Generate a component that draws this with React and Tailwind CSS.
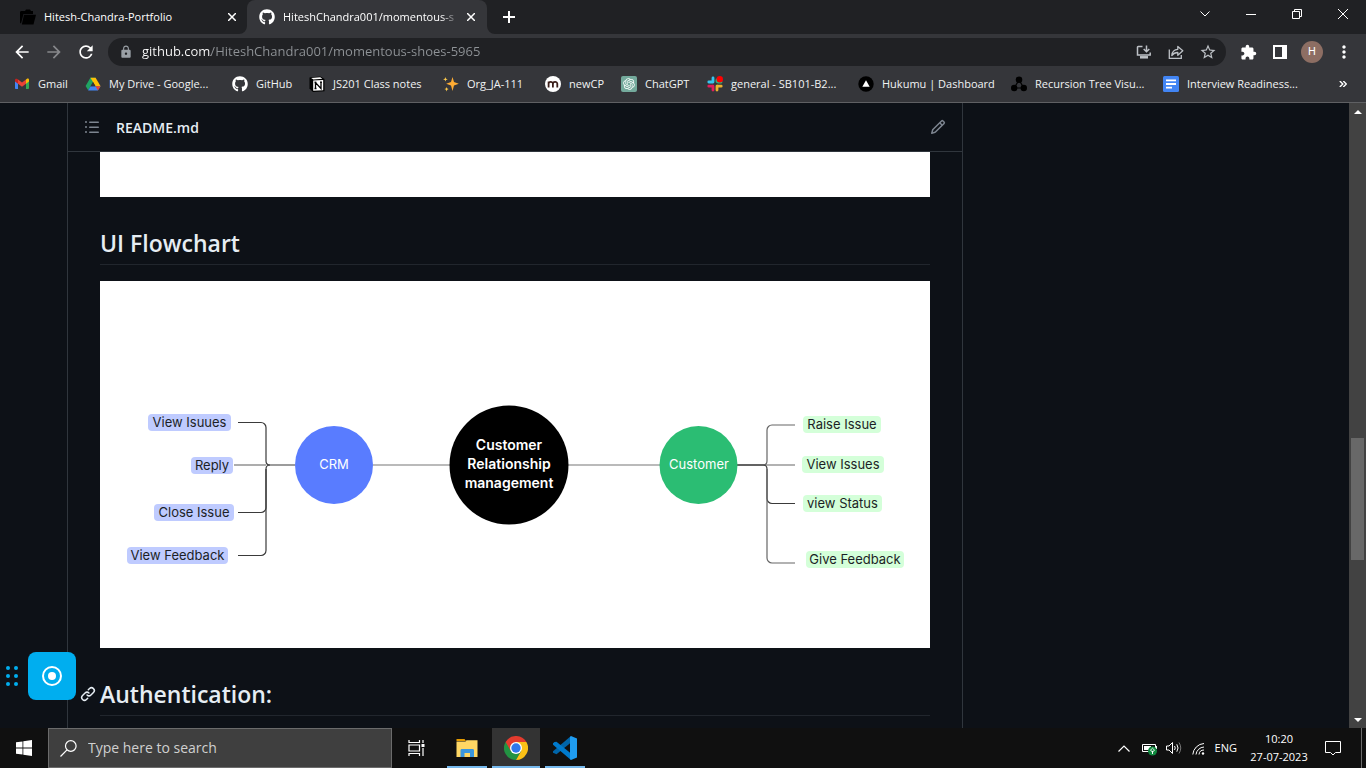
import React from "react";
import { FaGithub } from "react-icons/fa";
import { RiOpenaiFill } from "react-icons/ri";
import { MdArrowBack, MdArrowForward, MdRefresh, MdLock, MdStarOutline, MdExtension, MdMoreVert } from "react-icons/md";

const ListIcon = () => (
  <svg viewBox="0 0 16 16" className="size-4" fill="#7d8590">
    <path d="M5.750 2.500h8.500a.75.75 0 0 1 0 1.500h-8.500a.75.75 0 0 1 0-1.500Zm0 5h8.500a.75.75 0 0 1 0 1.500h-8.500a.75.75 0 0 1 0-1.500Zm0 5h8.500a.75.75 0 0 1 0 1.500h-8.500a.75.75 0 0 1 0-1.500ZM2 14a1 1 0 1 1 0-2 1 1 0 0 1 0 2Zm1-6a1 1 0 1 1-2 0 1 1 0 0 1 2 0ZM2 4a1 1 0 1 1 0-2 1 1 0 0 1 0 2Z" />
  </svg>
);

const PencilIcon = () => (
  <svg viewBox="0 0 16 16" className="size-4" fill="#7d8590">
    <path d="M11.013 1.427a1.750 1.750 0 0 1 2.474 0l1.086 1.086a1.750 1.750 0 0 1 0 2.474l-8.610 8.610c-.21.21-.47.364-.756.445l-3.251.93a.75.75 0 0 1-.927-.928l.929-3.250c.081-.286.235-.547.445-.758l8.610-8.610Zm.176 4.823L9.750 4.810l-6.286 6.287a.253.253 0 0 0-.064.108l-.558 1.953 1.953-.558a.253.253 0 0 0 .108-.064Zm1.238-3.763a.25.25 0 0 0-.354 0L10.811 3.750l1.439 1.440 1.263-1.263a.25.25 0 0 0 0-.354Z" />
  </svg>
);

const LinkIcon = () => (
  <svg viewBox="0 0 16 16" className="size-4" fill="#e6edf3">
    <path d="m7.775 3.275 1.250-1.250a3.500 3.500 0 1 1 4.950 4.950l-2.500 2.500a3.500 3.500 0 0 1-4.950 0 .751.751 0 0 1 .018-1.042.751.751 0 0 1 1.042-.018 1.998 1.998 0 0 0 2.830 0l2.500-2.500a2.002 2.002 0 0 0-2.830-2.830l-1.250 1.250a.751.751 0 0 1-1.042-.018.751.751 0 0 1-.018-1.042Zm-4.690 9.640a1.998 1.998 0 0 0 2.830 0l1.250-1.250a.751.751 0 0 1 1.042.018.751.751 0 0 1 .018 1.042l-1.250 1.250a3.500 3.500 0 1 1-4.950-4.950l2.500-2.500a3.500 3.500 0 0 1 4.950 0 .751.751 0 0 1-.018 1.042.751.751 0 0 1-1.042.018 1.998 1.998 0 0 0-2.830 0l-2.500 2.500a1.998 1.998 0 0 0 0 2.830Z" />
  </svg>
);

const GmailIcon = () => (
  <svg viewBox="0 0 16 16" className="size-4">
    <path d="M1 4v8.2c0 .5.4.8.8.8H4V6.600z" fill="#4285f4" />
    <path d="M15 4v8.200c0 .5-.4.800-.8.800H12V6.600z" fill="#34a853" />
    <path d="M12 3.600v4.200l3-2.300V4c0-1.400-1.400-1.800-2.300-1z" fill="#fbbc04" />
    <path d="M4 3.600v4.200L8 10.800l4-3V3.600L8 6.600z" fill="#ea4335" />
    <path d="M1 4v1.500l3 2.300V3.600L3.300 3C2.400 2.300 1 2.700 1 4z" fill="#c5221f" />
  </svg>
);

const DriveIcon = () => (
  <svg viewBox="0 0 16 16" className="size-4">
    <path d="M5.400 1.800h5.200L5.600 10.200 3.200 14.300.6 10z" fill="#1fa463" />
    <path d="M5.400 1.800h5.200l5 8.400h-5z" fill="#ffc107" />
    <path d="M5.600 10.200h9.900l-2.600 4.200H3.100z" fill="#4285f4" />
    <path d="M8 6l2.400 4.200H5.600z" fill="#35363a" />
    <path d="M12.900 14.400l2.600-4.200h-5z" fill="#ea4335" />
  </svg>
);

const NotionIcon = () => (
  <svg viewBox="0 0 16 16" className="size-4">
    <path d="M.5 1.500L11.500.500 15.500 3v12.200L4 16 .5 12.500z" fill="#000" />
    <path d="M4.200 4.500l10-.6v10.300l-10 .6z" fill="#fff" />
    <path d="M2.200 1.900l9-.7 2.200 1.600-9 .6z" fill="#fff" />
    <path d="M6.500 12.400V6.600l5.500 5.900V6.200M5.500 6.500h2M11 6.200h2M5.500 12.500h2" stroke="#000" strokeWidth="1.300" fill="none" />
  </svg>
);

const SparkleIcon = () => (
  <svg viewBox="0 0 16 16" className="size-4">
    <path d="M9.500 1l1.500 5 4.800 1.800L11 9.600 9.500 15 8 9.600 3.200 7.800 8 6z" fill="#ffac33" />
    <path d="M2.400 1l.6 1.700 1.700.6-1.700.600L2.400 5.600l-.6-1.700L.1 3.300l1.700-.6zM3.600 11l.6 1.500 1.500.600-1.500.6-.6 1.700-.6-1.700-1.600-.600 1.600-.6z" fill="#ffcc4d" />
  </svg>
);

const NewCpIcon = () => (
  <svg viewBox="0 0 16 16" className="size-4">
    <circle cx="8" cy="8" r="8" fill="#fff" />
    <path d="M3.600 11.500V5.500M3.600 7.800c0-2.400 4.300-2.600 4.300 0v3.700M7.900 7.800c0-2.400 4.400-2.600 4.400 0v3.700" fill="none" stroke="#3b1f1a" strokeWidth="1.800" />
  </svg>
);

const ChatGptIcon = () => (
  <span className="flex size-4 items-center justify-center rounded-xs bg-[#74aa9c]">
    <RiOpenaiFill className="size-3.5 text-white" />
  </span>
);

const SlackIcon = () => (
  <svg viewBox="0 0 16 16" className="size-4" strokeWidth="2.800" strokeLinecap="round">
    <path d="M6 2v4M1.800 6H5" stroke="#36c5f0" />
    <path d="M10 5.500V4M11 6h3" stroke="#2eb67d" />
    <path d="M10 10.200V14M10.500 10.200h3.700" stroke="#ecb22e" />
    <path d="M6 10.200V14M1.800 10.200H5.500" stroke="#e01e5a" />
    <circle cx="12.800" cy="3.200" r="3.200" fill="#f00" />
  </svg>
);

const HukumuIcon = () => (
  <svg viewBox="0 0 16 16" className="size-4">
    <circle cx="8" cy="8" r="7.700" fill="#000" />
    <path d="M8 4.200l3.700 6.600H4.300z" fill="#fff" />
  </svg>
);

const TreeIcon = () => (
  <svg viewBox="0 0 16 16" className="size-4">
    <path d="M8 4L3.200 12h9.600z" fill="none" stroke="#000" strokeWidth="1.200" />
    <circle cx="8" cy="3.800" r="3.300" />
    <circle cx="3.200" cy="12" r="3.200" />
    <circle cx="12.800" cy="12" r="3.200" />
  </svg>
);

const DocsIcon = () => (
  <svg viewBox="0 0 16 16" className="size-4">
    <rect width="16" height="16" rx="1.500" fill="#4285f4" />
    <path d="M3 4.300h10M3 8h10M3 11.700h6" stroke="#fff" strokeWidth="1.800" />
  </svg>
);

const bookmarks = [
  { label: "Gmail", icon: <GmailIcon />, width: "w-[71px]" },
  { label: "My Drive - Google...", icon: <DriveIcon />, width: "w-[147px]" },
  { label: "GitHub", icon: <FaGithub className="size-4 text-white" />, width: "w-[77px]" },
  { label: "JS201 Class notes", icon: <NotionIcon />, width: "w-[134px]" },
  { label: "Org_JA-111", icon: <SparkleIcon />, width: "w-[102px]" },
  { label: "newCP", icon: <NewCpIcon />, width: "w-[76px]" },
  { label: "ChatGPT", icon: <ChatGptIcon />, width: "w-[86px]" },
  { label: "general - SB101-B2...", icon: <SlackIcon />, width: "w-[151px]" },
  { label: "Hukumu | Dashboard", icon: <HukumuIcon />, width: "w-[153px]" },
  { label: "Recursion Tree Visu...", icon: <TreeIcon />, width: "w-[152px]" },
  { label: "Interview Readiness...", icon: <DocsIcon />, width: "w-[152px]" },
];

const CloseIcon = () => (
  <svg viewBox="0 0 8 8" className="size-2" stroke="#fff" strokeWidth="1.500">
    <path d="M0 0l8 8M8 0L0 8" />
  </svg>
);

function TabStrip() {
  const control = "flex w-[46px] items-center justify-center";
  return (
    <div className="flex h-[34px] shrink-0 bg-[#202124] pl-2 text-[11px] text-white">
      <div className="flex w-[239px] items-center pl-3 pr-[11px]">
        <svg viewBox="0 0 16 16" className="size-4 shrink-0">
          <path d="M0 3.500C0 2.600.5 2 1.500 2H5l1-1.500h4L11 2h2v3H3.500L1 14.500C.3 14.200 0 13.800 0 13z" />
          <path d="M4 5.800h12l-2.500 9.700H1.800z" />
        </svg>
        <span className="ml-2 min-w-0 flex-1 truncate">Hitesh-Chandra-Portfolio</span>
        <button aria-label="Close Hitesh-Chandra-Portfolio"><CloseIcon /></button>
      </div>
      <div className="relative flex w-60 items-center rounded-t-lg bg-[#35363a] pl-3 pr-3">
        <svg viewBox="0 0 8 8" className="absolute bottom-0 -left-2 size-2"><path d="M8 0v8H0a8 8 0 0 0 8-8z" fill="#35363a" /></svg>
        <svg viewBox="0 0 8 8" className="absolute -right-2 bottom-0 size-2"><path d="M0 0v8h8a8 8 0 0 1-8-8z" fill="#35363a" /></svg>
        <FaGithub className="size-4 shrink-0" />
        <span className="ml-2 min-w-0 flex-1 whitespace-nowrap mask-r-from-90% mask-r-to-100%">HiteshChandra001/momentous-s</span>
        <button className="ml-2" aria-label="Close HiteshChandra001/momentous-shoes"><CloseIcon /></button>
      </div>
      <button className="ml-2 flex w-7 items-center justify-center" aria-label="New tab">
        <svg viewBox="0 0 12 12" className="size-3" stroke="#fff" strokeWidth="2"><path d="M6 0v12M0 6h12" /></svg>
      </button>
      <div className="ml-auto flex h-7">
        <button className={control} aria-label="Search tabs">
          <svg viewBox="0 0 10 6" className="h-1.5 w-2.5" fill="none" stroke="#fff"><path d="M.5.5L5 5 9.500.5" /></svg>
        </button>
        <button className={control} aria-label="Minimize">
          <svg viewBox="0 0 10 10" className="size-2.5" stroke="#fff"><path d="M0 5.500h10" /></svg>
        </button>
        <button className={control} aria-label="Restore">
          <svg viewBox="0 0 10 10" className="size-2.5" fill="none" stroke="#fff"><path d="M.5 2.500h7v7h-7zM2.500 2.500v-2h7v7h-2" /></svg>
        </button>
        <button className={control} aria-label="Close">
          <svg viewBox="0 0 10 10" className="size-2.5" stroke="#fff"><path d="M0 0l10 10M10 0L0 10" /></svg>
        </button>
      </div>
    </div>
  );
}

function Toolbar() {
  const btn = "flex size-7 shrink-0 items-center justify-center";
  return (
    <div className="flex h-9 shrink-0 items-center gap-2 bg-[#35363a] px-2 text-white">
      <div className="flex gap-1">
        <button className={btn} aria-label="Back"><MdArrowBack className="size-5" /></button>
        <button className={btn} aria-label="Forward"><MdArrowForward className="size-5 text-[#87888b]" /></button>
        <button className={btn} aria-label="Reload"><MdRefresh className="size-5" /></button>
      </div>
      <div className="flex h-7 min-w-0 flex-1 items-center rounded-full bg-[#202124] pl-[11px] pr-1">
        <MdLock className="size-3.5 shrink-0 text-[#9aa0a6]" />
        <input
          aria-label="Address"
          defaultValue="github.com/HiteshChandra001/momentous-shoes-5965"
          className="ml-[9px] min-w-0 flex-1 bg-[linear-gradient(to_right,#fff_69px,#8f9397_69px)] bg-clip-text text-[13px] text-transparent outline-none"
        />
        <div className="flex gap-1 text-[#bdc1c6]">
          <button className={btn} aria-label="Install app">
            <svg viewBox="0 0 16 16" className="size-4" fill="none" stroke="currentColor" strokeWidth="1.500">
              <path d="M6.500 2.500H2.200c-.500 0-.700.300-.7.800v7.700h12.700V8.500M10.500 1.500v6M7.700 5l2.800 2.800L13.300 5" />
              <path d="M4 13.300h8" strokeWidth="2.500" />
            </svg>
          </button>
          <button className={btn} aria-label="Share">
            <svg viewBox="0 0 16 16" className="size-4" fill="none" stroke="currentColor" strokeWidth="1.300">
              <path d="M1.300 5.500v8.800h12V11" />
              <path d="M3.800 11.500c.3-4 2.500-6 6-6.200V2.500l5 4.300-5 4.400V8.500c-2.500 0-4.500 1-6 3z" strokeLinejoin="round" />
            </svg>
          </button>
          <button className={btn} aria-label="Bookmark this tab"><MdStarOutline className="size-[18px]" /></button>
        </div>
      </div>
      <div className="flex gap-1">
        <button className={btn} aria-label="Extensions"><MdExtension className="size-[17px]" /></button>
        <button className={btn} aria-label="Side panel">
          <svg viewBox="0 0 14 14" className="size-3.5"><path d="M0 0h14v14H0zM2 2v10h7V2z" fill="#fff" fillRule="evenodd" /></svg>
        </button>
        <button className={btn} aria-label="Profile">
          <span className="flex size-[22px] items-center justify-center rounded-full bg-[#8d6e63] font-[Roboto] text-[11px]">H</span>
        </button>
        <button className={btn} aria-label="Menu"><MdMoreVert className="size-5" /></button>
      </div>
    </div>
  );
}

function BookmarksBar() {
  return (
    <nav className="flex h-[33px] shrink-0 items-center border-b border-[#5f6063] bg-[#35363a] pb-1 pl-3.5 pr-[19px] text-[11px] text-[#f1f3f4]">
      {bookmarks.map((b) => (
        <a key={b.label} href="#" className={`flex shrink-0 items-center gap-2 whitespace-nowrap ${b.width}`}>
          <span className="shrink-0">{b.icon}</span>
          {b.label}
        </a>
      ))}
      <button className="ml-auto" aria-label="More bookmarks">
        <svg viewBox="0 0 8 6" className="h-1.5 w-2" fill="none" stroke="#fff" strokeWidth="1.400"><path d="M.8 0l3 3-3 3M4.300 0l3 3-3 3" /></svg>
      </button>
    </nav>
  );
}

const tags = [
  { x: 48, y: 133, w: 83, label: "View Isuues", fill: "#bfcbff" },
  { x: 91, y: 176, w: 42, label: "Reply", fill: "#bfcbff" },
  { x: 54, y: 223, w: 80, label: "Close Issue", fill: "#bfcbff" },
  { x: 27, y: 266, w: 101, label: "View Feedback", fill: "#bfcbff" },
  { x: 703, y: 135, w: 78, label: "Raise Issue", fill: "#d4ffd9" },
  { x: 702, y: 175, w: 82, label: "View Issues", fill: "#d4ffd9" },
  { x: 703, y: 214, w: 79, label: "view Status", fill: "#d4ffd9" },
  { x: 706, y: 270, w: 98, label: "Give Feedback", fill: "#d4ffd9" },
];

function Flowchart() {
  return (
    <svg viewBox="0 0 830 367" className="block w-full bg-white font-[Inter]" role="img" aria-label="UI flowchart" textAnchor="middle" fontSize="13">
      <g fill="none" stroke="#3a3a3a" strokeWidth="1.200">
        <path d="M273 184H350M468 184H560" stroke="#777" />
        <path d="M138 141.500H161a5 5 0 0 1 5 5V180q0 4 4 4H195" />
        <path d="M134 184H166" stroke="#777" />
        <path d="M138 231.500H161a5 5 0 0 0 5-5V188q0-4 4-4" />
        <path d="M138 274.500H161a5 5 0 0 0 5-5V188" />
        <path d="M637 184H663q4 0 4-4V149a5 5 0 0 1 5-5H695" stroke="#666" />
        <path d="M637 184H695" stroke="#666" />
        <path d="M637 184H663q4 0 4 4V217.500a5 5 0 0 0 5 5H695" />
        <path d="M667 188V277a5 5 0 0 0 5 5H695" stroke="#666" />
      </g>
      <circle cx="234" cy="184" r="39" fill="#597cff" />
      <circle cx="409" cy="184" r="59.500" fill="#000" />
      <circle cx="598.500" cy="184" r="39" fill="#2bbd73" />
      <g fill="#fff">
        <text x="234" y="188">CRM</text>
        <text x="599" y="188">Customer</text>
        <g fontWeight="600" fontSize="14">
          <text x="409" y="169">Customer</text>
          <text x="409" y="188">Relationship</text>
          <text x="409" y="207">management</text>
        </g>
      </g>
      {tags.map((t) => (
        <g key={t.label}>
          <rect x={t.x} y={t.y} width={t.w} height="17" rx="4" fill={t.fill} />
          <text x={t.x + t.w / 2} y={t.y + 13} fill="#1c1f26">{t.label}</text>
        </g>
      ))}
    </svg>
  );
}

function Heading({ children, linked }) {
  return (
    <h2 className="relative mt-[30px] mb-4 border-b border-[#21262d] pb-[5px] text-[23px] leading-8 font-semibold">
      {linked && (
        <a href="#authentication" aria-label="Permalink" className="absolute top-2 -left-5"><LinkIcon /></a>
      )}
      {children}
    </h2>
  );
}

function Scrollbar() {
  return (
    <div className="flex w-[17px] shrink-0 flex-col bg-[#424242]">
      <button className="flex h-[17px] items-center justify-center" aria-label="Scroll up">
        <svg viewBox="0 0 8 4" className="h-1 w-2"><path d="M0 4l4-4 4 4z" fill="#fff" /></svg>
      </button>
      <div className="flex flex-1 flex-col px-0.5">
        <div className="flex-[318]" />
        <div className="flex-[122] bg-[#686868]" />
        <div className="flex-[151]" />
      </div>
      <button className="flex h-[17px] items-center justify-center" aria-label="Scroll down">
        <svg viewBox="0 0 8 4" className="h-1 w-2"><path d="M0 0l4 4 4-4z" fill="#fff" /></svg>
      </button>
    </div>
  );
}

function Recorder() {
  return (
    <div className="absolute bottom-7 left-0 flex items-center gap-2.5 pl-1.5">
      <svg viewBox="0 0 12 20" className="h-5 w-3" fill="#00aeef">
        <circle cx="2" cy="2" r="2" /><circle cx="10" cy="2" r="2" />
        <circle cx="2" cy="10" r="2" /><circle cx="10" cy="10" r="2" />
        <circle cx="2" cy="18" r="2" /><circle cx="10" cy="18" r="2" />
      </svg>
      <button className="flex size-12 items-center justify-center rounded-lg bg-[#00aeef]" aria-label="Record">
        <svg viewBox="0 0 20 20" className="size-5"><circle cx="10" cy="10" r="9" fill="none" stroke="#fff" strokeWidth="2" /><circle cx="10" cy="10" r="4" fill="#fff" /></svg>
      </button>
    </div>
  );
}

function Taskbar() {
  const app = "flex w-12 flex-col items-center justify-between pt-2";
  return (
    <footer className="flex h-10 shrink-0 bg-[#101010] text-white">
      <button className="flex w-12 items-center justify-center" aria-label="Start">
        <svg viewBox="0 0 16 16" className="size-4" fill="#fff"><path d="M0 2.300l6.500-.9v6.100H0zM7.300 1.300L16 0v7.500H7.300zM0 8.400h6.500v6.200L0 13.700zM7.300 8.400H16V16l-8.700-1.200z" /></svg>
      </button>
      <label className="flex w-[344px] items-center border border-[#6b6b6b] bg-[#3f3f3f] pl-[11px]">
        <svg viewBox="0 0 17 17" className="size-[17px] shrink-0" fill="none" stroke="#fff" strokeWidth="1.200"><circle cx="10.800" cy="6" r="5.300" /><path d="M7 9.800L.5 16.500" /></svg>
        <input aria-label="Search" placeholder="Type here to search" className="ml-[11px] min-w-0 flex-1 bg-transparent text-sm outline-none placeholder:text-[#d0d0d0]" />
      </label>
      <button className="flex w-12 items-center justify-center" aria-label="Task view">
        <svg viewBox="0 0 17 16" className="h-4 w-[17px]" fill="none" stroke="#fff" strokeWidth="1.200"><path d="M1 0v2.500h10.500V0M1 5h10.500v6H1zM1 16v-2.500h10.500V16M15 0v3M15 8v8" /><path d="M13.500 4h3v3h-3z" fill="#fff" stroke="none" /></svg>
      </button>
      <div className="ml-[3px] flex gap-px">
        <button className={app} aria-label="File Explorer">
          <svg viewBox="0 0 24 24" className="size-6"><path d="M1.500 3h8l1.500 2H1.500z" fill="#e59b00" /><path d="M1.500 5.500h9l1-1.300h11V21h-21z" fill="#ffd764" /><path d="M5.500 21v-6.500c0-1 .5-1.500 1.500-1.500h10.500c1 0 1.500.5 1.500 1.500V21h-4v-4H9.500v4z" fill="#3a96dd" /></svg>
          <span className="h-0.5 w-10 bg-[#76b9ed]" />
        </button>
        <button className={`${app} bg-[#333]`} aria-label="Google Chrome">
          <svg viewBox="0 0 24 24" className="size-6">
            <path d="M12 12L1.600 6A12 12 0 0 0 12 24l5.200-9z" fill="#229342" />
            <path d="M12 6h10.400A12 12 0 0 1 12 24l5.200-9z" fill="#fbc116" />
            <path d="M1.600 6A12 12 0 0 1 22.400 6H12L6.800 9 6.800 15z" fill="#e33b2e" />
            <circle cx="12" cy="12" r="6" fill="#fff" /><circle cx="12" cy="12" r="4.700" fill="#2f78ec" />
          </svg>
          <span className="h-0.5 w-12 bg-[#76b9ed]" />
        </button>
        <button className={app} aria-label="Visual Studio Code">
          <svg viewBox="0 0 24 24" className="size-6"><path d="M18 0L18 6.500 3.500 18.300 0 16.800v-1.500z" fill="#0065a9" /><path d="M1.500 6L0 7.300v1.500L18 24v-6.500L3.500 5.800z" fill="#007acc" /><path d="M18 0l6 2.500v19L18 24l-1-1V1z" fill="#1f9cf0" /></svg>
          <span className="h-0.5 w-10 bg-[#76b9ed]" />
        </button>
      </div>
      <div className="ml-auto flex items-center pr-1 text-[11px]">
        <button aria-label="Show hidden icons" className="mr-3"><svg viewBox="0 0 12 7" className="h-[7px] w-3" fill="none" stroke="#fff" strokeWidth="1.200"><path d="M.5 6.500L6 1l5.500 5.500" /></svg></button>
        <svg viewBox="0 0 16 14" className="mt-0.5 mr-2 h-3.5 w-4"><path d="M.5 2.500h13v7H.5z" fill="none" stroke="#fff" /><path d="M2 4h7v4H2zM14 4h1v3h-1z" fill="#fff" /><circle cx="10.500" cy="9" r="4.500" fill="#10893e" /><path d="M10.500 12V9M8.800 8.500c0-1.200 1-1.500 1.700-2.300.7.800 1.700 1.100 1.700 2.300s-3.400 1.200-3.400 0z" stroke="#fff" fill="none" /></svg>
        <svg viewBox="0 0 16 14" className="mr-2.5 h-3.5 w-4" fill="none" stroke="#fff"><path d="M.5 5v4h2.500l3.500 3.500v-11L3 5zM8.500 5q1.500 2 0 4M10.800 3.300q2.500 3.700 0 7.400" /><path d="M13 1.500q3.500 5.500 0 11" stroke="#777" /></svg>
        <svg viewBox="0 0 13 13" className="mr-2.5 size-[13px]" fill="none" stroke="#fff"><path d="M.8 12.500A12 12 0 0 1 12 1.500M4 12.500a8.500 8.500 0 0 1 8-7.500M7 12.500a5 5 0 0 1 5-4.500" /><circle cx="11" cy="11.500" r="1.200" fill="#fff" stroke="none" /></svg>
        <span>ENG</span>
        <div className="ml-2 w-[68px] text-center leading-[18px]"><div>10:20</div><div className="whitespace-nowrap">27-07-2023</div></div>
        <button className="mr-5 ml-3" aria-label="Notifications"><svg viewBox="0 0 16 16" className="size-4" fill="none" stroke="#fff"><path d="M.5 1.500h15v11h-5L8 15l-2.500-2.500h-5z" /></svg></button>
        <span className="h-10 w-px bg-[#6b6b6b]" />
      </div>
    </footer>
  );
}

export default function App() {
  return (
    <div className="flex h-screen flex-col overflow-hidden bg-[#0d1117] font-['Open_Sans',sans-serif]">
      <TabStrip />
      <Toolbar />
      <BookmarksBar />
      <div className="relative flex min-h-0 flex-1">
        <main className="min-w-0 flex-1 overflow-hidden pl-[67px] text-[#e6edf3]">
          <article className="min-h-full max-w-4xl border-x border-[#30363d]">
            <header className="flex h-[49px] items-center border-b border-[#30363d] px-4 text-sm font-semibold">
              <button aria-label="Outline"><ListIcon /></button>
              <span className="ml-4 pt-0.5">README.md</span>
              <button className="ml-auto" aria-label="Edit"><PencilIcon /></button>
            </header>
            <div className="px-8">
              <div className="h-[45px] bg-white" />
              <Heading>UI Flowchart</Heading>
              <Flowchart />
              <Heading linked>Authentication:</Heading>
            </div>
          </article>
        </main>
        <Scrollbar />
        <Recorder />
      </div>
      <Taskbar />
    </div>
  );
}
